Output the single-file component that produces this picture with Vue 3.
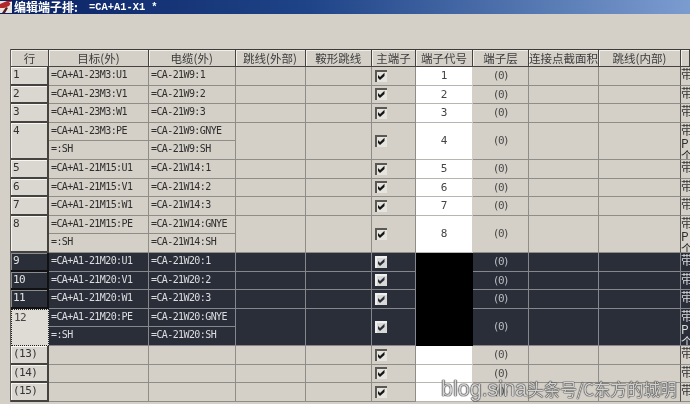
<script setup>
const headers = ['行', '目标(外)', '电缆(外)', '跳线(外部)', '鞍形跳线', '主端子', '端子代号', '端子层', '连接点截面积', '跳线(内部)', '']

const rows = [
  { id: '1', t: ['=CA+A1-23M3:U1'], c: ['=CA-21W9:1'], code: '1' },
  { id: '2', t: ['=CA+A1-23M3:V1'], c: ['=CA-21W9:2'], code: '2' },
  { id: '3', t: ['=CA+A1-23M3:W1'], c: ['=CA-21W9:3'], code: '3' },
  { id: '4', t: ['=CA+A1-23M3:PE', '=:SH'], c: ['=CA-21W9:GNYE', '=CA-21W9:SH'], code: '4' },
  { id: '5', t: ['=CA+A1-21M15:U1'], c: ['=CA-21W14:1'], code: '5' },
  { id: '6', t: ['=CA+A1-21M15:V1'], c: ['=CA-21W14:2'], code: '6' },
  { id: '7', t: ['=CA+A1-21M15:W1'], c: ['=CA-21W14:3'], code: '7' },
  { id: '8', t: ['=CA+A1-21M15:PE', '=:SH'], c: ['=CA-21W14:GNYE', '=CA-21W14:SH'], code: '8' },
  { id: '9', t: ['=CA+A1-21M20:U1'], c: ['=CA-21W20:1'], code: '', sel: true },
  { id: '10', t: ['=CA+A1-21M20:V1'], c: ['=CA-21W20:2'], code: '', sel: true },
  { id: '11', t: ['=CA+A1-21M20:W1'], c: ['=CA-21W20:3'], code: '', sel: true },
  { id: '12', t: ['=CA+A1-21M20:PE', '=:SH'], c: ['=CA-21W20:GNYE', '=CA-21W20:SH'], code: '', sel: true, focus: true },
  { id: '(13)', t: [], c: [], code: '' },
  { id: '(14)', t: [], c: [], code: '' },
  { id: '(15)', t: [], c: [], code: '' }
]
</script>

<template>
  <div class="window">
    <div class="titlebar">
      <svg class="appicon" width="13" height="14" viewBox="0 0 13 14">
        <rect x="0" y="1" width="12" height="12" fill="#e9e6e0" />
        <path d="M0 4 L7 1 L12 1 L9 6 L4 8 L0 8 Z" fill="#b3262a" />
        <path d="M2 13 L6 7 L8 8 L5 13 Z" fill="#5a1b20" />
        <path d="M9 2 L12 2 L12 5 Z" fill="#fff" />
      </svg>
      <span class="title-cjk">编辑端子排:</span>
      <span class="title-doc">=CA+A1-X1 *</span>
    </div>

    <div class="content">
      <div class="table">
        <div class="row head">
          <div v-for="(h, i) in headers" :key="i" class="hcell">{{ h }}</div>
        </div>

        <div
          v-for="r in rows"
          :key="r.id"
          class="row"
          :class="{ sel: r.sel, double: r.t.length === 2 }"
        >
          <div class="rowhead" :class="{ focus: r.focus }">{{ r.id }}</div>
          <div class="cell stack">
            <div v-for="(x, i) in r.t" :key="i" class="line">{{ x }}</div>
          </div>
          <div class="cell stack">
            <div v-for="(x, i) in r.c" :key="i" class="line">{{ x }}</div>
          </div>
          <div class="cell"></div>
          <div class="cell"></div>
          <div class="cell center-left">
            <svg class="check" width="12" height="12" viewBox="0 0 12 12">
              <rect class="check-bg" x="0" y="0" width="12" height="12" />
              <path class="check-tl" d="M0 12V0H12V2H2V12Z" />
              <path class="check-mark" d="M3 5L5 7L9.5 2.8V6L5 10L3 8Z" />
            </svg>
          </div>
          <div class="cell code">{{ r.code }}</div>
          <div class="cell zero">(0)</div>
          <div class="cell"></div>
          <div class="cell"></div>
          <div class="cell tail">{{ r.t.length === 2 ? '带P个' : '带' }}</div>
        </div>
      </div>

      <div class="watermark">
        <span class="wm-latin">blog.sina</span>
        <span class="wm-cjk">头条号/C东方的城明</span>
      </div>
    </div>
  </div>
</template>

<style>
html, body {
  margin: 0;
  background: #d4d0c8;
}
</style>

<style scoped>
.window {
  width: 690px;
  height: 404px;
  overflow: hidden;
  background: #d4d0c8;
  font-family: "Noto Sans CJK SC", sans-serif;
  filter: blur(0.35px);
}

.titlebar {
  height: 14px;
  display: flex;
  align-items: center;
  background: linear-gradient(90deg, #0a2263 0%, #1f4488 45%, #7b9ccf 100%);
  color: #fff;
  white-space: nowrap;
}

.appicon {
  flex: none;
  margin-right: 1px;
}

.title-cjk {
  font-size: 12px;
  font-weight: 700;
  line-height: 14px;
  width: 75px;
}

.title-doc {
  font-family: "Liberation Mono", monospace;
  font-size: 10.4px;
  font-weight: 700;
  line-height: 14px;
}

.content {
  position: relative;
  height: 390px;
  padding: 35px 0 0 10px;
  box-sizing: border-box;
}

.table {
  width: 680px;
  border-left: 1px solid #5e5c58;
  box-sizing: border-box;
}

.row {
  display: grid;
  grid-template-columns: 38px 100px 86.5px 70px 66.5px 44px 57px 56px 70px 82px 9px;
  height: 18.6px;
}

.row.double {
  height: 37.2px;
}

.head {
  height: 18px;
  border-top: 1px solid #3d3b38;
  box-sizing: border-box;
}

.hcell {
  display: flex;
  align-items: center;
  justify-content: center;
  overflow: hidden;
  white-space: nowrap;
  font-size: 11.5px;
  color: #3c3c3c;
  box-sizing: border-box;
  border-right: 1px solid #45433f;
  border-bottom: 1px solid #45433f;
  box-shadow: inset 1px 1px 0 #f2f0ea;
}

.rowhead {
  box-sizing: border-box;
  padding: 1px 0 0 2px;
  font-family: "DejaVu Sans Mono", monospace;
  font-size: 11px;
  line-height: 13px;
  letter-spacing: -0.5px;
  color: #333;
  background: #dad7d0;
  border-right: 2px solid #45433f;
  border-bottom: 2px solid #45433f;
  box-shadow: inset 1px 1px 0 #f7f6f2;
}

.rowhead.focus {
  background: #dfdcd5;
  color: #444;
  border: 1px dotted #222;
  box-shadow: none;
}

.cell {
  box-sizing: border-box;
  border-right: 1px solid #8f8d88;
  border-bottom: 1px solid #8f8d88;
  font-family: "DejaVu Sans Mono", monospace;
  color: #2e2e2e;
  overflow: hidden;
}

.stack {
  display: flex;
  flex-direction: column;
  border-bottom: none;
}

.line {
  flex: 1;
  box-sizing: border-box;
  padding: 1px 0 0 2px;
  font-size: 10px;
  line-height: 13px;
  letter-spacing: -0.6px;
  white-space: nowrap;
  border-bottom: 1px solid #8f8d88;
}

.stack:empty {
  border-bottom: 1px solid #8f8d88;
}

.center-left {
  display: flex;
  align-items: center;
  padding: 0 0 0 3px;
}

.check {
  display: block;
  flex: none;
}

.check-bg {
  fill: #e6e4de;
}

.check-tl {
  fill: #5a5854;
}

.check-mark {
  fill: #161616;
}

.code {
  display: flex;
  align-items: center;
  justify-content: center;
  background: #fff;
  font-size: 11px;
  color: #444;
  border-bottom-color: #b8b6b0;
  border-right-color: #d4d0c8;
}

.zero {
  display: flex;
  align-items: center;
  justify-content: center;
  font-size: 11px;
  letter-spacing: -1.4px;
  color: #4a4a4a;
}

.tail {
  border-right: none;
  border-left: 1px solid #55534f;
  margin-left: -1px;
  width: 10px;
  font-family: "Noto Sans CJK SC", sans-serif;
  font-size: 12px;
  line-height: 13px;
  word-break: break-all;
  color: #2e2e2e;
}

.sel {
  background: #2a2e39;
}

.sel .rowhead:not(.focus) {
  background: #2a2e39;
  color: #e2e2e2;
  border-right-color: #111;
  border-bottom-color: #111;
  box-shadow: inset 1px 1px 0 #8a8c90;
}

.sel .cell,
.sel .line,
.sel .stack:empty {
  color: #dcdde0;
  border-color: #85878c;
}

.sel .code {
  background: #000;
  border-bottom-color: #000;
  border-right-color: #000;
}

.sel .zero {
  color: #b9bbc0;
}

.sel .check-bg {
  fill: #d8d8d6;
}

.sel .check-tl {
  fill: #f0f0f0;
}

.sel .check-mark {
  fill: #2a2e39;
}

.watermark {
  position: absolute;
  left: 441px;
  top: 362px;
  display: flex;
  align-items: baseline;
  white-space: nowrap;
  color: rgba(255, 255, 255, 0.8);
  text-shadow: 0 0 1px #222, 0 0 1px #222, 0 0 1px #222;
}

.wm-latin {
  font-family: "Liberation Sans", sans-serif;
  font-size: 21.5px;
  line-height: 26px;
}

.wm-cjk {
  font-family: "Noto Sans CJK SC", sans-serif;
  font-size: 16.8px;
  line-height: 26px;
  letter-spacing: -0.2px;
}
</style>
